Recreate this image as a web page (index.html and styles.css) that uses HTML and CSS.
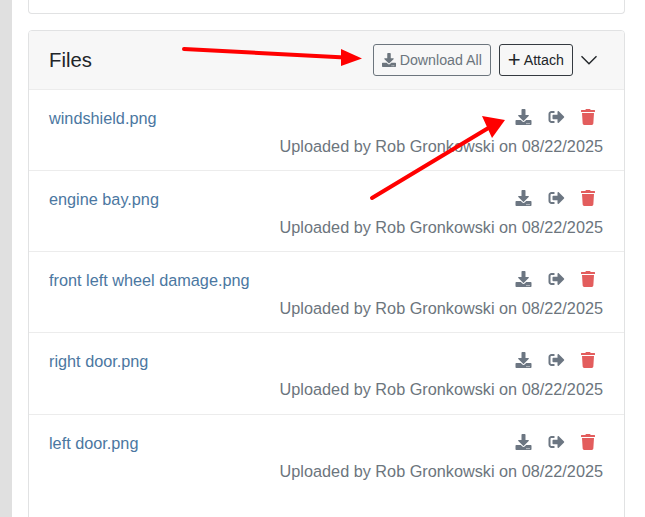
FILE: index.html
```html
<!doctype html>
<html>
<head>
    <meta charset="utf-8" />
    <title>Files</title>
    <link rel="stylesheet" href="styles.css">
</head>

<body>
    <svg class="icon-defs" width="0" height="0">
        <symbol id="i-download" viewBox="0 0 512 512"><path d="M216 0h80c13.3 0 24 10.7 24 24v168h87.7c17.8 0 26.7 21.5 14.1 34.1L269.7 378.3c-7.5 7.5-19.8 7.5-27.3 0L90.1 226.1c-12.6-12.6-3.7-34.1 14.1-34.1H192V24c0-13.3 10.7-24 24-24zm296 376v112c0 13.3-10.7 24-24 24H24c-13.3 0-24-10.7-24-24V376c0-13.3 10.7-24 24-24h146.7l49 49c20.1 20.1 52.5 20.1 72.6 0l49-49H488c13.3 0 24 10.7 24 24zm-124 88c0-11-9-20-20-20s-20 9-20 20 9 20 20 20 20-9 20-20zm64 0c0-11-9-20-20-20s-20 9-20 20 9 20 20 20 20-9 20-20z"/></symbol>
        <symbol id="i-signout" viewBox="0 0 512 512"><path d="M497 273L329 441c-15 15-41 4.5-41-17v-96H152c-13.3 0-24-10.7-24-24v-96c0-13.3 10.7-24 24-24h136V88c0-21.4 25.9-32 41-17l168 168c9.3 9.4 9.3 24.6 0 34zM192 436v-40c0-6.6-5.4-12-12-12H96c-17.7 0-32-14.3-32-32V160c0-17.7 14.3-32 32-32h84c6.6 0 12-5.4 12-12V76c0-6.6-5.4-12-12-12H96c-53 0-96 43-96 96v192c0 53 43 96 96 96h84c6.6 0 12-5.4 12-12z"/></symbol>
        <symbol id="i-trash" viewBox="0 0 448 512"><path d="M432 32H312l-9.4-18.7A24 24 0 0 0 281.1 0H166.8a23.72 23.72 0 0 0-21.4 13.3L136 32H16A16 16 0 0 0 0 48v32a16 16 0 0 0 16 16h416a16 16 0 0 0 16-16V48a16 16 0 0 0-16-16zM53.2 467a48 48 0 0 0 47.9 45h245.8a48 48 0 0 0 47.9-45L416 128H32z"/></symbol>
    </svg>

    <div class="page">
        <div class="sidebar"></div>
        <div class="content">
            <div class="card top-card"></div>

            <div class="card files">
                <div class="files-header">
                    <h2>Files</h2>
                    <div class="files-actions">
                        <button class="btn btn-muted">
                            <svg class="btn-icon"><use href="#i-download"/></svg>Download All
                        </button>
                        <button class="btn btn-dark"><span class="plus">+</span>Attach</button>
                        <svg class="chevron" viewBox="0 0 16 16"><path d="M.5 4.3 8 11.7l7.5-7.4" fill="none" stroke="currentColor" stroke-width="1.4"/></svg>
                    </div>
                </div>

                <div class="file">
                    <div class="file-top">
                        <a class="file-name">windshield.png</a>
                        <div class="file-icons">
                            <svg class="ico"><use href="#i-download"/></svg>
                            <svg class="ico"><use href="#i-signout"/></svg>
                            <svg class="ico trash"><use href="#i-trash"/></svg>
                        </div>
                    </div>
                    <div class="file-meta">Uploaded by Rob Gronkowski on 08/22/2025</div>
                </div>
                <div class="file">
                    <div class="file-top">
                        <a class="file-name">engine bay.png</a>
                        <div class="file-icons">
                            <svg class="ico"><use href="#i-download"/></svg>
                            <svg class="ico"><use href="#i-signout"/></svg>
                            <svg class="ico trash"><use href="#i-trash"/></svg>
                        </div>
                    </div>
                    <div class="file-meta">Uploaded by Rob Gronkowski on 08/22/2025</div>
                </div>
                <div class="file">
                    <div class="file-top">
                        <a class="file-name">front left wheel damage.png</a>
                        <div class="file-icons">
                            <svg class="ico"><use href="#i-download"/></svg>
                            <svg class="ico"><use href="#i-signout"/></svg>
                            <svg class="ico trash"><use href="#i-trash"/></svg>
                        </div>
                    </div>
                    <div class="file-meta">Uploaded by Rob Gronkowski on 08/22/2025</div>
                </div>
                <div class="file">
                    <div class="file-top">
                        <a class="file-name">right door.png</a>
                        <div class="file-icons">
                            <svg class="ico"><use href="#i-download"/></svg>
                            <svg class="ico"><use href="#i-signout"/></svg>
                            <svg class="ico trash"><use href="#i-trash"/></svg>
                        </div>
                    </div>
                    <div class="file-meta">Uploaded by Rob Gronkowski on 08/22/2025</div>
                </div>
                <div class="file">
                    <div class="file-top">
                        <a class="file-name">left door.png</a>
                        <div class="file-icons">
                            <svg class="ico"><use href="#i-download"/></svg>
                            <svg class="ico"><use href="#i-signout"/></svg>
                            <svg class="ico trash"><use href="#i-trash"/></svg>
                        </div>
                    </div>
                    <div class="file-meta">Uploaded by Rob Gronkowski on 08/22/2025</div>
                </div>
            </div>
        </div>
    </div>

    <!-- annotation arrows drawn over the screenshot -->
    <svg class="arrows" viewBox="0 0 645 517">
        <line x1="184" y1="49" x2="345" y2="57.5" stroke="#f00" stroke-width="4" stroke-linecap="round"/>
        <polygon points="341,49 362,58.5 341,66" fill="#f00"/>
        <line x1="372" y1="198" x2="490" y2="127" stroke="#f00" stroke-width="4" stroke-linecap="round"/>
        <polygon points="482,116 505,120 492,138" fill="#f00"/>
    </svg>
</body>

</html>
```

FILE: styles.css
```css
html, body {
    margin: 0;
    height: 517px;
    overflow: hidden;
    background-color: #fff;
}
body {
    position: relative;
    font-family: 'Liberation Sans', Arial, sans-serif;
    font-size: 16.25px;
    color: #212529;
}
.icon-defs {
    position: absolute;
}

.page {
    display: flex;
    height: 100%;
}
.sidebar {
    width: 12px;
    flex-shrink: 0;
    background-color: #e0e0e0;
}
.content {
    width: 597px;
    margin-left: 16px;
    display: flex;
    flex-direction: column;
    gap: 16px;
}

.card {
    box-sizing: border-box;
    background-color: #fff;
    border: 1px solid #e1e2e3;
    border-radius: 4px;
}
.top-card {
    height: 14px;
    flex-shrink: 0;
    border-top: 0;
    border-top-left-radius: 0;
    border-top-right-radius: 0;
}
.files {
    flex-grow: 1;
    margin-bottom: -10px;
}

.files-header {
    box-sizing: border-box;
    height: 59px;
    padding: 0 27px 0 20px;
    display: flex;
    align-items: center;
    justify-content: space-between;
    background-color: #f7f7f7;
    border-bottom: 1px solid #ececec;
    border-radius: 3px 3px 0 0;
}
.files-header h2 {
    margin: 0;
    font-size: 20.3px;
    font-weight: 400;
    color: #212529;
}
.files-actions {
    display: flex;
    align-items: center;
    gap: 8px;
}
.btn {
    height: 31.5px;
    padding: 0 8px;
    display: flex;
    align-items: center;
    font-family: inherit;
    font-size: 14.22px;
    background-color: transparent;
    border: 1px solid;
    border-radius: 3px;
}
.btn-muted {
    color: #6c757d;
    border-color: #6c757d;
}
.btn-dark {
    color: #212529;
    border-color: #343a40;
}
.btn-icon {
    width: 14px;
    height: 14px;
    margin-right: 4px;
    fill: currentColor;
}
.plus {
    margin-right: 3px;
    font-size: 22px;
    font-weight: 400;
    line-height: 1;
}
.chevron {
    width: 16px;
    height: 16px;
    color: #212529;
}

.file {
    box-sizing: border-box;
    height: 81.15px;
    padding: 16px 21px 0 20px;
    border-bottom: 1px solid #ececec;
}
.file:last-child {
    border-bottom: 0;
}
.file-top {
    display: flex;
    justify-content: space-between;
    align-items: flex-start;
}
.file-name {
    line-height: 24px;
    color: #4b77a1;
}
.file-icons {
    display: flex;
    gap: 16px;
    padding: 3px 8px 0 0;
}
.ico {
    width: 17px;
    height: 16px;
    fill: #6c7682;
}
.ico.trash {
    width: 14px;
    fill: #e35d5d;
}
.file-meta {
    margin-top: 4px;
    line-height: 24px;
    text-align: right;
    color: #6c757d;
}

.arrows {
    position: absolute;
    left: 0;
    top: 0;
    width: 645px;
    height: 517px;
    pointer-events: none;
}
```
